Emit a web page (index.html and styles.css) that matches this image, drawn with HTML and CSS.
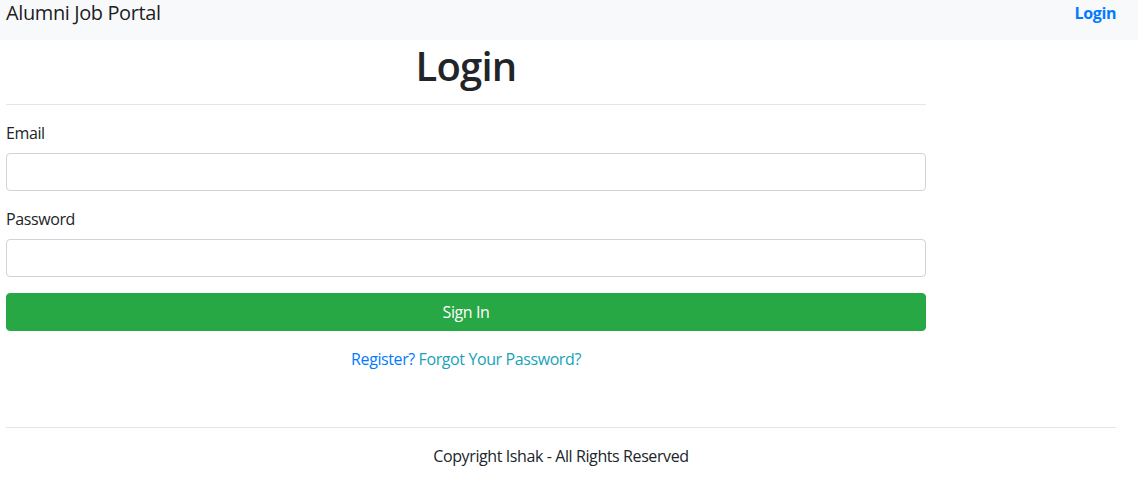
FILE: index.html
```html
<!DOCTYPE html>
<html lang="en">
<head>
<meta charset="utf-8">
<title>Alumni Job Portal - Login</title>
<link rel="stylesheet" href="styles.css">
</head>
<body>
<nav class="navbar">
  <a class="brand" href="#">Alumni Job Portal</a>
  <a class="nav-login" href="#">Login</a>
</nav>
<main class="page">
  <section class="login">
    <h1 class="title">Login</h1>
    <hr class="rule">
    <form class="form">
      <div class="group">
        <label class="label" for="email">Email</label>
        <input class="input" id="email" type="email">
      </div>
      <div class="group">
        <label class="label" for="password">Password</label>
        <input class="input" id="password" type="password">
      </div>
      <button class="btn" type="button">Sign In</button>
    </form>
    <p class="links"><a class="link-register" href="#">Register?</a> <a class="link-forgot" href="#">Forgot Your Password?</a></p>
  </section>
  <footer class="footer">
    <hr class="rule">
    <p class="copy">Copyright Ishak - All Rights Reserved</p>
  </footer>
</main>
</body>
</html>
```
FILE: styles.css
```css
* { box-sizing: border-box; }
html, body { margin: 0; padding: 0; }
body {
  font-family: "Open Sans", "Noto Sans", "Liberation Sans", sans-serif;
  font-size: 16px;
  line-height: 24px;
  letter-spacing: -0.4px;
  color: #212529;
  background: #fff;
}
a { text-decoration: none; }
.navbar {
  height: 40px;
  background: #f8f9fa;
  display: flex;
  justify-content: space-between;
  align-items: flex-start;
  padding: 0 22px 0 6px;
}
.brand {
  font-size: 20px;
  line-height: 26px;
  color: rgba(0,0,0,.9);
}
.nav-login {
  font-weight: 700;
  color: #007bff;
  line-height: 26px;
}
.page {
  padding: 0 22px 0 6px;
}
.login { width: 920px; }
.title {
  margin: 0;
  padding-top: 3px;
  font-size: 40px;
  line-height: 45px;
  font-weight: 600;
  letter-spacing: -0.8px;
  text-align: center;
}
.rule {
  margin: 16px 0;
  border: 0;
  border-top: 1px solid rgba(0,0,0,.1);
  height: 0;
}
.form { margin: 0; }
.group { margin-bottom: 16px; }
.label { display: block; margin-bottom: 8px; }
.input {
  display: block;
  width: 100%;
  height: 38px;
  border: 1px solid #ced4da;
  border-radius: 4px;
  padding: 6px 12px;
  font: inherit;
  background: #fff;
}
.btn {
  display: block;
  width: 100%;
  height: 38px;
  border: 1px solid #28a745;
  border-radius: 4px;
  background: #28a745;
  color: #fff;
  font: inherit;
  letter-spacing: -0.4px;
  padding: 6px 12px;
}
.links {
  margin: 16px 0 0;
  text-align: center;
}
.link-register { color: #007bff; }
.link-forgot { color: #17a2b8; }
.footer { margin-top: 56px; }
.copy { margin: 0; text-align: center; }
```
